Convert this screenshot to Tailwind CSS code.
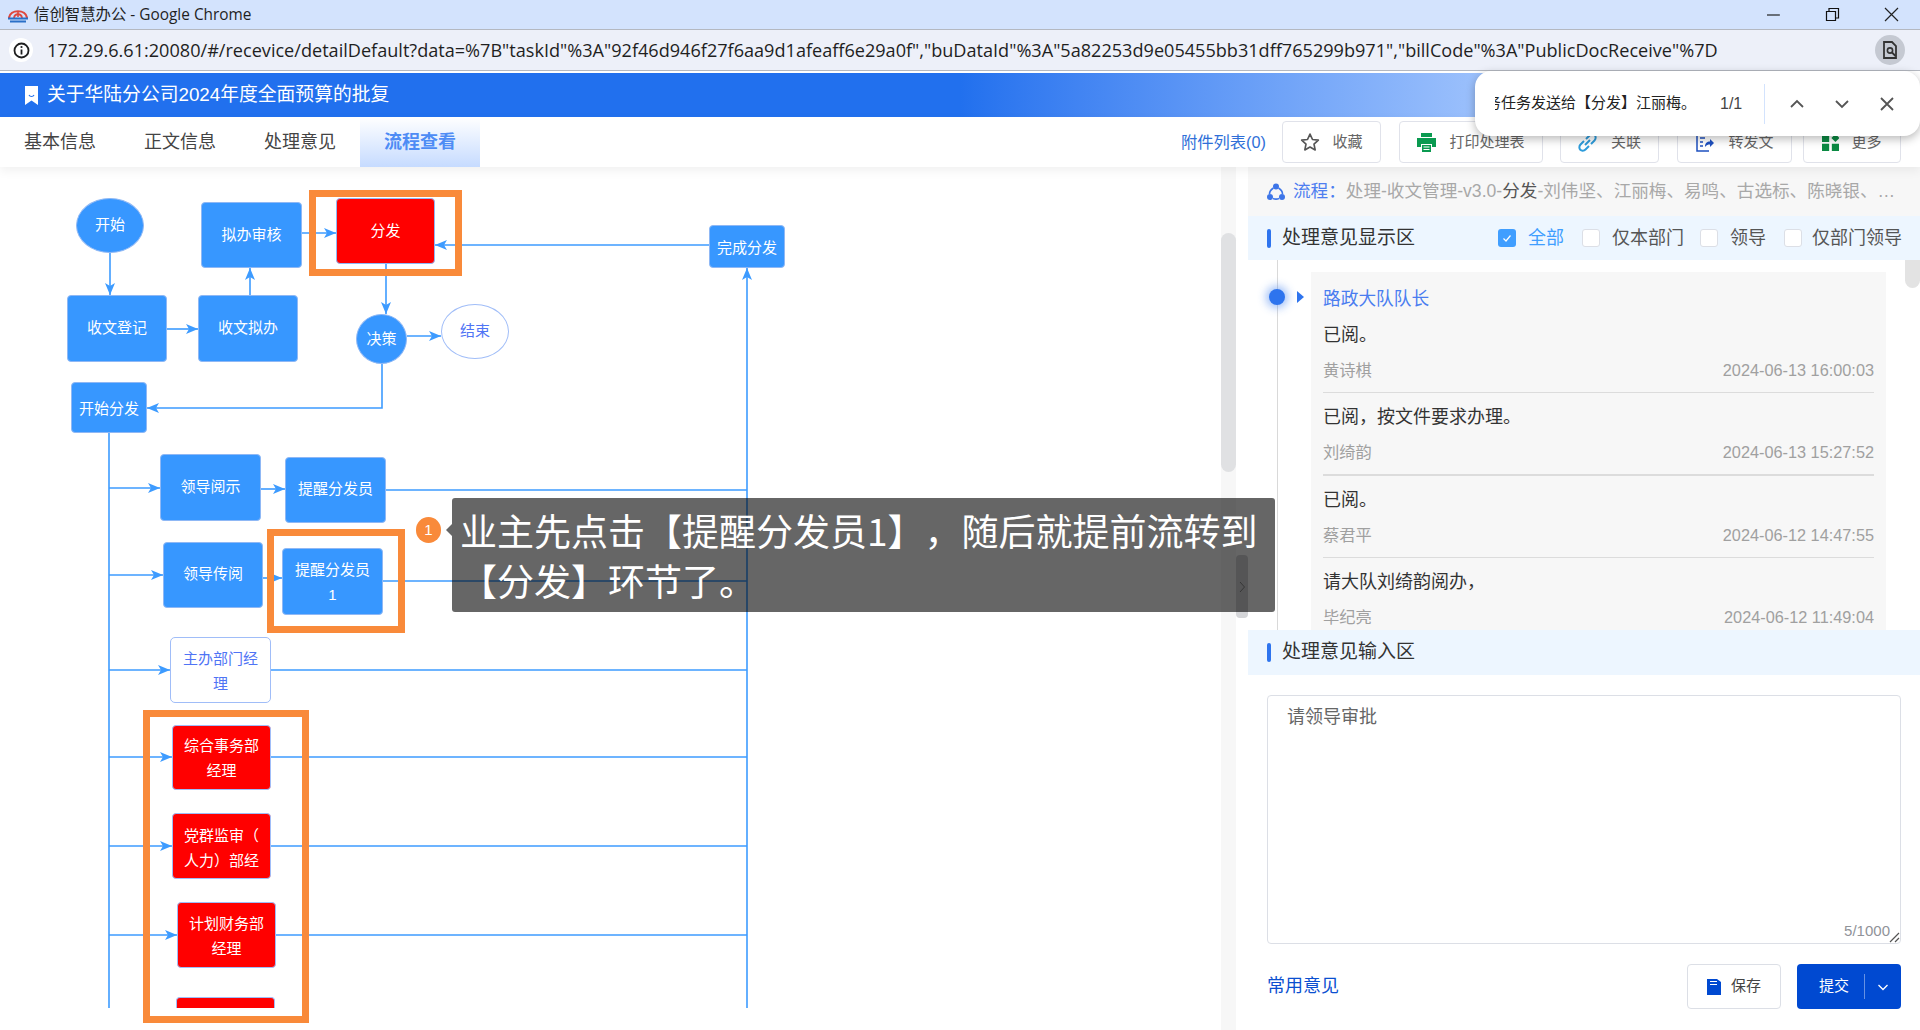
<!DOCTYPE html>
<html lang="zh-CN">
<head>
<meta charset="utf-8">
<title>信创智慧办公</title>
<script src="https://cdn.jsdelivr.net/npm/@tailwindcss/browser@4"></script>
</head>
<body class="bg-white">
<div class="relative flex h-[1030px] w-[1920px] flex-col overflow-hidden bg-white font-['Liberation_Sans','Noto_Sans_CJK_SC',sans-serif] [text-spacing-trim:space-all]">

    <!-- Chrome title bar -->
    <div class="flex h-[30px] shrink-0 items-center border-b border-[#b4b8c0] bg-[#d3e3fd] font-['Open_Sans','Noto_Sans_CJK_SC',sans-serif] text-[#1f1f1f]">
        <svg class="ml-2 h-4 w-5" viewBox="0 0 20 16">
            <path d="M1 11C2 2 18 2 19 11" fill="none" stroke="#e0483e" stroke-width="2.2"/>
            <path d="M6 11C6.5 6 13.5 6 14 11" fill="none" stroke="#e0483e" stroke-width="1.8"/>
            <path d="M9.2 4H10.8V10H9.2z" fill="#e0483e"/>
            <path d="M0 10.5H20V12.5H0zM2 13.5H18V15.5H2z" fill="#2a70c8"/>
        </svg>
        <span class="ml-[6px] text-[15.4px] leading-none">信创智慧办公 - Google Chrome</span>
        <div class="ml-auto flex items-center">
            <svg class="mr-[43px] h-4 w-4" viewBox="0 0 16 16"><path d="M1 8H14" stroke="#222" stroke-width="1.2"/></svg>
            <svg class="mr-[44px] h-[15px] w-[15px]" viewBox="0 0 15 15"><path d="M1.5 4.5H10.5V13.5H1.5zM4 4.5V1.5H13.5V11H10.5" fill="none" stroke="#111" stroke-width="1.2"/></svg>
            <svg class="mr-[21px] h-[15px] w-[15px]" viewBox="0 0 15 15"><path d="M1 1L14 14M14 1L1 14" stroke="#222" stroke-width="1.2"/></svg>
        </div>
    </div>

    <!-- Chrome address bar -->
    <div class="flex h-[41px] shrink-0 items-center border-b border-[#b4b8c0] bg-[#edf0f9]">
        <div class="ml-[9px] flex h-6 w-6 items-center justify-center rounded-full bg-white">
            <svg class="h-[17px] w-[17px]" viewBox="0 0 17 17">
                <circle cx="8.5" cy="8.5" r="7" fill="none" stroke="#1f1f1f" stroke-width="1.8"/>
                <path d="M8.5 7.5V12.5" stroke="#1f1f1f" stroke-width="1.8"/>
                <circle cx="8.5" cy="5" r="1.1" fill="#1f1f1f"/>
            </svg>
        </div>
        <span class="ml-[14px] whitespace-nowrap font-['Open_Sans',sans-serif] text-[18.1px] leading-none text-[#1f1f1f]">172.29.6.61:20080/#/recevice/detailDefault?data=%7B"taskId"%3A"92f46d946f27f6aa9d1afeaff6e29a0f","buDataId"%3A"5a82253d9e05455bb31dff765299b971","billCode"%3A"PublicDocReceive"%7D</span>
        <div class="ml-auto mr-[15px] flex h-[30px] w-[30px] items-center justify-center rounded-full bg-[#c5c9d2]">
            <svg class="h-5 w-5" viewBox="0 0 20 20">
                <path d="M4 2H12L16 6V18H4z" fill="none" stroke="#333" stroke-width="1.8"/>
                <circle cx="10" cy="10.5" r="2.6" fill="none" stroke="#333" stroke-width="1.6"/>
                <path d="M12 12.5L15.5 16" stroke="#333" stroke-width="1.8"/>
            </svg>
        </div>
    </div>

    <div class="h-[2px] shrink-0 bg-white"></div>

    <!-- Document title -->
    <div class="flex h-11 shrink-0 items-center bg-gradient-to-r from-[#2170ee] from-50% to-white text-white">
        <svg class="ml-[25px] h-[19px] w-[13px]" viewBox="0 0 13 19">
            <path d="M0 0H13V19L6.5 14.5L0 19z" fill="#fff"/>
            <path d="M4 9C5 11 8 11 9 9" fill="none" stroke="#2170ee" stroke-width="1.2"/>
        </svg>
        <span class="ml-[9px] text-[18.8px]">关于华陆分公司2024年度全面预算的批复</span>
    </div>

    <!-- Tabs and toolbar -->
    <div class="relative z-10 flex h-[50px] shrink-0 items-center bg-white shadow-[0_4px_10px_rgba(0,0,0,0.06)]">
        <div class="flex h-full w-[120px] items-center justify-center text-[18px] text-[#444]">基本信息</div>
        <div class="flex h-full w-[120px] items-center justify-center text-[18px] text-[#444]">正文信息</div>
        <div class="flex h-full w-[120px] items-center justify-center text-[18px] text-[#444]">处理意见</div>
        <div class="flex h-full w-[120px] items-center justify-center bg-gradient-to-b from-white to-[#c6dbff] text-[18px] font-bold text-[#4e8cf5]">流程查看</div>

        <div class="ml-auto mr-[19px] flex items-center">
            <span class="mr-4 text-[16.3px] text-[#2f6fd8]">附件列表(0)</span>
            <div class="flex h-[42px] w-[99px] items-center justify-center gap-[12px] rounded border border-[#e0e2ea] text-[15px] text-[#666]">
                <svg class="h-[20px] w-[20px]" viewBox="0 0 24 24"><path d="M12 2.5L15 9L22 9.8L16.8 14.5L18.2 21.5L12 18L5.8 21.5L7.2 14.5L2 9.8L9 9z" fill="none" stroke="#555" stroke-width="2" stroke-linejoin="round"/></svg>
                收藏
            </div>
            <div class="ml-[18px] flex h-[42px] w-[144px] items-center justify-center gap-[13px] rounded border border-[#e0e2ea] text-[15px] text-[#666]">
                <svg class="h-[19px] w-[19px]" viewBox="0 0 19 19">
                    <path d="M4 0H15V4H4zM0 5H19V14H15V11H4V14H0zM5 12H14V19H5z" fill="#0a9a50"/>
                    <path d="M6.5 14H12.5M6.5 16.5H12.5" stroke="#fff" stroke-width="1.2"/>
                </svg>
                打印处理表
            </div>
            <div class="ml-[17px] flex h-[42px] w-[99px] items-center justify-center gap-[14px] rounded border border-[#e0e2ea] text-[15px] text-[#666]">
                <svg class="h-[19px] w-[19px]" viewBox="0 0 19 19" fill="none" stroke="#2d9cdb" stroke-width="2">
                    <path d="M8 6L11.5 2.5C13 1 15.5 1 16.8 2.3C18 3.5 18 6 16.5 7.5L13 11"/>
                    <path d="M11 13L7.5 16.5C6 18 3.5 18 2.3 16.8C1 15.5 1 13 2.5 11.5L6 8"/>
                    <path d="M7 12L12 7"/>
                </svg>
                关联
            </div>
            <div class="ml-[18px] flex h-[42px] w-[115px] items-center justify-center gap-[14px] rounded border border-[#e0e2ea] text-[15px] text-[#666]">
                <svg class="h-[19px] w-[19px]" viewBox="0 0 19 19" fill="none" stroke="#1e50c0" stroke-width="1.5">
                    <path d="M12 1H2V18H14"/>
                    <path d="M5 5H10M5 9H8M5 13H8"/>
                    <path d="M10 14C10 10 12 8.5 15 8.5V6L19 10L15 14V11.5C13 11.5 11.5 12 10 14z" fill="#1e50c0" stroke="none"/>
                </svg>
                转发文
            </div>
            <div class="ml-[11px] flex h-[42px] w-[98px] items-center justify-center gap-[12px] rounded border border-[#e0e2ea] text-[15px] text-[#666]">
                <svg class="h-[17px] w-[17px]" viewBox="0 0 19 19" fill="#0b8a43">
                    <path d="M0 1H8V9H0zM0 11H8V19H0zM11 11H19V19H11zM15 0L19.5 4.5L15 9L10.5 4.5z"/>
                </svg>
                更多
            </div>
        </div>
    </div>

    <!-- Find in page popup -->
    <div class="absolute right-0 top-[71px] z-30 flex h-[65px] w-[445px] items-center rounded-[16px] bg-white shadow-[0_3px_10px_rgba(0,0,0,0.28)]">
        <div class="ml-5 w-[195px] overflow-hidden whitespace-nowrap text-[15px] text-[#222]"><span class="-ml-[9px] inline-block">务任务发送给【分发】江丽梅。</span></div>
        <span class="ml-[30px] text-[16px] text-[#444]">1/1</span>
        <div class="ml-[22px] h-10 w-px bg-[#d3e3fd]"></div>
        <svg class="ml-[24px] h-4 w-4" viewBox="0 0 16 16"><path d="M2 11L8 5L14 11" fill="none" stroke="#555" stroke-width="1.8"/></svg>
        <svg class="ml-[29px] h-4 w-4" viewBox="0 0 16 16"><path d="M2 5L8 11L14 5" fill="none" stroke="#555" stroke-width="1.8"/></svg>
        <svg class="ml-[30px] h-[14px] w-[14px]" viewBox="0 0 14 14"><path d="M1 1L13 13M13 1L1 13" stroke="#555" stroke-width="1.8"/></svg>
    </div>

    <div class="flex min-h-0 flex-1">
        <!-- Flow diagram -->
        <div class="relative w-[1248px] shrink-0 bg-white">
            <div class="absolute bottom-0 left-[1221px] top-0 w-[15px] bg-[#f7f7f7]">
                <div class="mt-[66px] h-[239px] rounded-full bg-[#e0e1e3]"></div>
            </div>
            <div class="absolute left-[1236px] top-[388px] flex h-[63px] w-3 items-center justify-center rounded bg-[#d4d5d8]">
                <svg class="h-3 w-2" viewBox="0 0 8 12"><path d="M2 1L6.5 6L2 11" fill="none" stroke="#888" stroke-width="1"/></svg>
            </div>

            <svg class="absolute left-0 top-0" width="1221" height="841" viewBox="0 0 1221 841" fill="none" stroke="#3d9bff" stroke-width="1.6">
                <defs>
                    <marker id="arrow" markerUnits="userSpaceOnUse" markerWidth="13" markerHeight="12" refX="12" refY="6" orient="auto">
                        <path d="M0 1L12 6L0 11L3 6z" fill="#3d9bff" stroke="none"/>
                    </marker>
                </defs>
                <path d="M110 86V128" marker-end="url(#arrow)"/>
                <path d="M167 162H198" marker-end="url(#arrow)"/>
                <path d="M250 128V101" marker-end="url(#arrow)"/>
                <path d="M302 66H336" marker-end="url(#arrow)"/>
                <path d="M709 78H435" marker-end="url(#arrow)"/>
                <path d="M386 97V147" marker-end="url(#arrow)"/>
                <path d="M407 169H441" marker-end="url(#arrow)"/>
                <path d="M382 197V241H147" marker-end="url(#arrow)"/>
                <path d="M109 266V841"/>
                <path d="M747 841V101" marker-end="url(#arrow)"/>
                <path d="M109 321H160" marker-end="url(#arrow)"/>
                <path d="M261 322H285" marker-end="url(#arrow)"/>
                <path d="M386 323H747"/>
                <path d="M109 408H163" marker-end="url(#arrow)"/>
                <path d="M263 411H282" marker-end="url(#arrow)"/>
                <path d="M383 414H747"/>
                <path d="M109 503H170" marker-end="url(#arrow)"/>
                <path d="M271 503H747"/>
                <path d="M109 590H172" marker-end="url(#arrow)"/>
                <path d="M271 590H747"/>
                <path d="M109 679H172" marker-end="url(#arrow)"/>
                <path d="M271 679H747"/>
                <path d="M109 768H177" marker-end="url(#arrow)"/>
                <path d="M276 768H747"/>
            </svg>

            <div class="absolute left-[76px] top-[31px] flex h-[55px] w-[68px] items-center justify-center rounded-[50%] border border-[#8fb8f5] bg-[#3797ff] text-[15px] text-white">开始</div>
            <div class="absolute left-[201px] top-[35px] flex h-[66px] w-[101px] items-center justify-center rounded border border-[#8fb8f5] bg-[#3797ff] text-[15px] text-white">拟办审核</div>
            <div class="absolute left-[336px] top-[31px] flex h-[66px] w-[99px] items-center justify-center rounded border border-[#8fb8f5] bg-[#ff0000] text-[15px] text-white">分发</div>
            <div class="absolute left-[709px] top-[58px] flex h-[43px] w-[76px] items-center justify-center rounded border border-[#8fb8f5] bg-[#3797ff] pt-[3px] text-[15px] text-white">完成分发</div>
            <div class="absolute left-[67px] top-[128px] flex h-[67px] w-[100px] items-center justify-center rounded border border-[#8fb8f5] bg-[#3797ff] text-[15px] text-white">收文登记</div>
            <div class="absolute left-[198px] top-[128px] flex h-[67px] w-[100px] items-center justify-center rounded border border-[#8fb8f5] bg-[#3797ff] text-[15px] text-white">收文拟办</div>
            <div class="absolute left-[356px] top-[147px] flex h-[50px] w-[51px] items-center justify-center rounded-[50%] border border-[#8fb8f5] bg-[#3797ff] text-[15px] text-white">决策</div>
            <div class="absolute left-[441px] top-[137px] flex h-[55px] w-[68px] items-center justify-center rounded-[50%] border border-[#a0bdf8] bg-white text-[15px] text-[#4f74f5]">结束</div>
            <div class="absolute left-[71px] top-[215px] flex h-[51px] w-[76px] items-center justify-center rounded border border-[#8fb8f5] bg-[#3797ff] pt-[3px] text-[15px] text-white">开始分发</div>
            <div class="absolute left-[160px] top-[287px] flex h-[67px] w-[101px] items-center justify-center rounded border border-[#8fb8f5] bg-[#3797ff] text-[15px] text-white">领导阅示</div>
            <div class="absolute left-[285px] top-[290px] flex h-[66px] w-[101px] items-center justify-center rounded border border-[#8fb8f5] bg-[#3797ff] pb-[2px] text-[15px] text-white">提醒分发员</div>
            <div class="absolute left-[163px] top-[375px] flex h-[66px] w-[100px] items-center justify-center rounded border border-[#8fb8f5] bg-[#3797ff] pb-[2px] text-[15px] text-white">领导传阅</div>
            <div class="absolute left-[282px] top-[381px] flex h-[67px] w-[101px] items-center justify-center rounded border border-[#8fb8f5] bg-[#3797ff] text-center text-[15px] leading-[25px] text-white">提醒分发员<br>1</div>
            <div class="absolute left-[170px] top-[470px] flex h-[66px] w-[101px] items-center justify-center rounded-[5px] border border-[#a0bdf8] bg-white pt-[2px] text-center text-[15px] leading-[25px] text-[#4f74f5]">主办部门经<br>理</div>
            <div class="absolute left-[172px] top-[558px] flex h-[65px] w-[99px] items-center justify-center rounded border border-[#a0bdf8] bg-[#ff0000] pt-[1px] text-center text-[15px] leading-[25px] text-white">综合事务部<br>经理</div>
            <div class="absolute left-[172px] top-[646px] flex h-[66px] w-[99px] items-center justify-center rounded border border-[#a0bdf8] bg-[#ff0000] pt-1 text-center text-[15px] leading-[25px] text-white">党群监审（<br>人力）部经</div>
            <div class="absolute left-[177px] top-[735px] flex h-[66px] w-[99px] items-center justify-center rounded border border-[#a0bdf8] bg-[#ff0000] pt-[2px] text-center text-[15px] leading-[25px] text-white">计划财务部<br>经理</div>
            <div class="absolute left-[176px] top-[830px] h-[11px] w-[99px] rounded-t border border-b-0 border-[#a0bdf8] bg-[#ff0000]"></div>

            <!-- Annotation frames -->
            <div class="absolute left-[309px] top-[23px] h-[86px] w-[153px] border-[7px] border-[#f98a3a]"></div>
            <div class="absolute left-[267px] top-[362px] h-[104px] w-[138px] border-[7px] border-[#f98a3a]"></div>
            <div class="absolute left-[143px] top-[543px] h-[313px] w-[166px] border-[7px] border-[#f98a3a]"></div>

            <!-- Annotation bubble -->
            <div class="absolute left-[416px] top-[350px] flex h-[26px] w-[25px] items-center justify-center rounded-full bg-[#f98a3a] text-[15px] text-white">1</div>
            <div class="absolute left-[452px] top-[331px] z-20 h-[114px] w-[823px] rounded-[3px] bg-black/60 px-2 pt-[7px] font-['Noto_Sans_CJK_SC',sans-serif] text-[37px] leading-[50px] text-white">
                <div class="absolute left-[-6px] top-[26px] h-0 w-0 border-y-[6px] border-r-[6px] border-y-transparent border-r-[#666]"></div>
                业主先点击【提醒分发员1】，随后就提前流转到<br>【分发】环节了。
            </div>
        </div>

        <!-- Opinion panel -->
        <div class="flex w-[672px] flex-col bg-white">
            <div class="flex h-[49px] shrink-0 items-center bg-[#f7f7f7] pl-[19px] text-[17.6px]">
                <svg class="h-[18px] w-[18px]" viewBox="0 0 18 18" fill="none" stroke="#3d75e8" stroke-width="1.6">
                    <path d="M6.5 5C4 6.5 2.5 8.5 2.5 11M11.5 5C14 6.5 15.5 8.5 15.5 11M6 15.5C8 16.3 10 16.3 12 15.5"/>
                    <circle cx="9" cy="3.5" r="3" fill="#3d75e8" stroke="none"/>
                    <circle cx="3" cy="14" r="3" fill="#3d75e8" stroke="none"/>
                    <circle cx="15" cy="14" r="3" fill="#3d75e8" stroke="none"/>
                </svg>
                <span class="ml-2 text-[#4e7ef0]">流程：</span>
                <span class="whitespace-nowrap text-[#a8a8a8]">处理-收文管理-v3.0-<span class="text-[#555]">分发</span>-刘伟坚、江丽梅、易鸣、古选标、陈晓银、…</span>
            </div>

            <div class="flex h-11 shrink-0 items-center bg-[#edf6ff] pl-[19px] text-[18px]">
                <div class="h-[19px] w-1 rounded-sm bg-[#2e74ee]"></div>
                <span class="ml-[11px] text-[19px] text-[#333]">处理意见显示区</span>
                <div class="ml-auto mr-[18px] flex items-center">
                    <div class="flex h-[18px] w-[18px] items-center justify-center rounded-[3px] bg-[#409eff]">
                        <svg class="h-3 w-3" viewBox="0 0 12 12"><path d="M2.5 6.5L5 9L9.5 3.5" fill="none" stroke="#fff" stroke-width="1.2"/></svg>
                    </div>
                    <span class="ml-3 text-[#409eff]">全部</span>
                    <div class="ml-[18px] h-[18px] w-[18px] rounded-[3px] border border-[#dcdfe6] bg-white"></div>
                    <span class="ml-3 text-[#555]">仅本部门</span>
                    <div class="ml-4 h-[18px] w-[18px] rounded-[3px] border border-[#dcdfe6] bg-white"></div>
                    <span class="ml-3 text-[#555]">领导</span>
                    <div class="ml-[18px] h-[18px] w-[18px] rounded-[3px] border border-[#dcdfe6] bg-white"></div>
                    <span class="ml-[10px] text-[#555]">仅部门领导</span>
                </div>
            </div>

            <div class="relative h-[370px] shrink-0 overflow-hidden">
                <div class="absolute bottom-0 left-[29px] top-0 w-px bg-[#d9d9d9]"></div>
                <div class="absolute left-[21px] top-[29px] h-4 w-4 rounded-full bg-[#2e74ee] shadow-[0_0_8px_3px_rgba(46,116,238,0.45)]"></div>
                <div class="absolute left-[49px] top-[31px] h-0 w-0 border-y-[6px] border-l-[7px] border-y-transparent border-l-[#2e74ee]"></div>
                <div class="absolute right-0 top-0 h-7 w-[15px] rounded-b-full bg-[#e3e3e3]"></div>

                <div class="ml-[63px] mt-3 w-[575px] bg-[#f7f7f7] px-3">
                    <div class="pt-[15px] text-[17.7px] leading-6 text-[#4a7df0]">路政大队队长</div>
                    <div class="h-[82px] border-b border-[#dcdcdc] pt-3">
                        <div class="text-[18px] leading-6 text-[#333]">已阅。</div>
                        <div class="mt-[11px] flex justify-between text-[16.3px] leading-6 text-[#a0a0a0]"><span>黄诗棋</span><span>2024-06-13 16:00:03</span></div>
                    </div>
                    <div class="h-[83px] border-b-2 border-[#dcdcdc] pt-3">
                        <div class="text-[18px] leading-6 text-[#333]">已阅，按文件要求办理。</div>
                        <div class="mt-[11px] flex justify-between text-[16.3px] leading-6 text-[#a0a0a0]"><span>刘绮韵</span><span>2024-06-13 15:27:52</span></div>
                    </div>
                    <div class="h-[82px] border-b border-[#dcdcdc] pt-3">
                        <div class="text-[18px] leading-6 text-[#333]">已阅。</div>
                        <div class="mt-[11px] flex justify-between text-[16.3px] leading-6 text-[#a0a0a0]"><span>蔡君平</span><span>2024-06-12 14:47:55</span></div>
                    </div>
                    <div class="h-[82px] pt-3">
                        <div class="text-[18px] leading-6 text-[#333]">请大队刘绮韵阅办，</div>
                        <div class="mt-[11px] flex justify-between text-[16.3px] leading-6 text-[#a0a0a0]"><span>毕纪亮</span><span>2024-06-12 11:49:04</span></div>
                    </div>
                </div>
            </div>

            <div class="flex h-[45px] shrink-0 items-center bg-[#edf6ff] pl-[19px]">
                <div class="h-[19px] w-1 rounded-sm bg-[#2e74ee]"></div>
                <span class="ml-[11px] text-[19px] text-[#333]">处理意见输入区</span>
            </div>

            <div class="pl-[19px] pr-[19px] pt-5">
                <div class="relative h-[249px] rounded border border-[#dcdfe6] bg-white px-[19px] py-[8px] text-[18px] leading-[26px] text-[#666]">
                    请领导审批
                    <span class="absolute bottom-[2px] right-[10px] text-[15px] leading-5 text-[#909399]">5/1000</span>
                    <svg class="absolute bottom-0 right-0 h-3 w-3" viewBox="0 0 12 12"><path d="M2 11L11 2M7 11L11 7" stroke="#555" stroke-width="1.2"/></svg>
                </div>
                <div class="mt-5 flex items-center">
                    <span class="text-[18px] text-[#0b4fd0]">常用意见</span>
                    <div class="ml-auto flex h-[45px] w-[94px] items-center justify-center gap-[10px] rounded border border-[#dcdfe6] bg-white text-[15px] text-[#444]">
                        <svg class="h-4 w-[14px]" viewBox="0 0 14 16"><path d="M0 0H10L14 3V16H0z" fill="#0049d1"/><path d="M3 2.5H10M3 5.5H10" stroke="#fff" stroke-width="1.2"/></svg>
                        保存
                    </div>
                    <div class="ml-4 flex h-[45px] w-[104px] items-center rounded bg-[#0049d1] text-[15px] text-white">
                        <span class="w-[67px] pl-[7px] text-center">提交</span>
                        <div class="h-[25px] w-px bg-white/40"></div>
                        <svg class="ml-[12px] h-3 w-3" viewBox="0 0 12 12"><path d="M1.5 4L6 8.5L10.5 4" fill="none" stroke="#fff" stroke-width="1.3"/></svg>
                    </div>
                </div>
            </div>
        </div>
    </div>
</div>
</body>
</html>
